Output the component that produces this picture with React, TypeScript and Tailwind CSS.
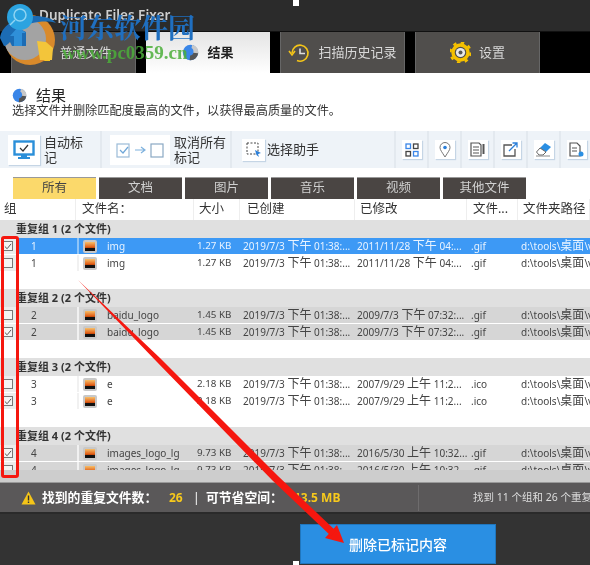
import React from "react";

const font = { fontFamily: '"Noto Sans", "Noto Sans CJK SC", sans-serif' };

function Thumb() {
  return (
    <div className="w-[14px] h-[13px] rounded-[2px] bg-[#c8c8c8] flex items-center justify-center">
      <svg width="10" height="9" viewBox="0 0 10 9">
        <defs>
          <linearGradient id="thumbGrad" x1="0" y1="0" x2="0" y2="1">
            <stop offset="0" stopColor="#f7c06a" />
            <stop offset="0.6" stopColor="#e0560f" />
            <stop offset="0.72" stopColor="#111" />
          </linearGradient>
        </defs>
        <rect width="10" height="9" fill="url(#thumbGrad)" />
      </svg>
    </div>
  );
}

function Check({ on }: { on: boolean }) {
  return (
    <div className="w-[10px] h-[10px] border border-[#777] bg-[#f4f4f4] flex items-center justify-center">
      {on && (
        <svg width="9" height="9" viewBox="0 0 9 9">
          <path d="M1 4.5 L3.5 7 L8 1.5" stroke="#555" strokeWidth="1.1" fill="none" />
        </svg>
      )}
    </div>
  );
}

type RowT = { on: boolean; n: number; name: string; size: string; mod: string; modT: string; ext: string };

function Row({ r, tone }: { r: RowT; tone: "sel" | "white" | "grey" }) {
  const bg = tone === "sel" ? "bg-[#3d99f5]" : tone === "white" ? "bg-white" : "bg-[#d6d6d6]";
  const fg = tone === "sel" ? "text-[#e8f3ff]" : "text-[#444]";
  return (
    <div className="flex h-[16px] mb-px overflow-hidden bg-[#f1f1f1]">
      <div className="w-[18px] flex items-center pl-[3px] bg-[#ececec] shrink-0">
        <Check on={r.on} />
      </div>
      <div className={`flex flex-1 items-center text-[10px] ${bg} ${fg}`}>
        <div className="w-[59px] pl-[13px] shrink-0">{r.n}</div>
        <div className={`w-[30px] h-full flex items-center pl-[4px] shrink-0 border-l-2 ${tone === "sel" ? "border-[#8fc5f8]" : "border-[#f1f1f1]"}`}>
          <Thumb />
        </div>
        <div className="w-[90px] shrink-0 text-[10px]">{r.name}</div>
        <div className="w-[46px] shrink-0 text-[9.8px]">{r.size}</div>
        <div className="w-[114px] shrink-0 whitespace-nowrap text-[10px]">
          2019/7/3 <span className="text-[12px]">下午</span> 01:38:...
        </div>
        <div className="w-[114px] shrink-0 whitespace-nowrap text-[10px]">
          {r.mod} <span className="text-[12px]">{r.modT.split(" ")[0]}</span> {r.modT.split(" ")[1]}
        </div>
        <div className="w-[50px] shrink-0">{r.ext}</div>
        <div className="whitespace-nowrap text-[10px]">
          d:\tools\<span className="text-[12px]">桌面</span>\v
        </div>
      </div>
    </div>
  );
}

function Group({ title, rows, tone }: { title: string; rows: RowT[]; tone: ("sel" | "white" | "grey")[] }) {
  return (
    <div>
      <div className="h-[18px] bg-[#e0e0e0] pl-[16px] flex items-center text-[11px] font-bold text-[#333]">{title}</div>
      {rows.map((r, i) => (
        <Row key={i} r={r} tone={tone[i]} />
      ))}
      <div className="h-[17px] bg-white" />
    </div>
  );
}

const img = { name: "img", size: "1.27 KB", mod: "2011/11/28", modT: "下午 04:...", ext: ".gif" };
const bd = { name: "baidu_logo", size: "1.45 KB", mod: "2009/7/3", modT: "下午 07:32:...", ext: ".gif" };
const e = { name: "e", size: "2.18 KB", mod: "2007/9/29", modT: "上午 11:2...", ext: ".ico" };
const lg = { name: "images_logo_lg", size: "9.73 KB", mod: "2016/5/30", modT: "上午 10:32...", ext: ".gif" };

function ToolSmall({ children }: { children: React.ReactNode }) {
  return (
    <div className="w-[33px] h-full border-r-2 border-[#e3e9ef] flex items-center justify-center shrink-0">
      <div className="w-[20px] h-[19px] bg-white shadow-[1px_1px_1px_#c5d5e5] flex items-center justify-center">{children}</div>
    </div>
  );
}

function Tab({ children, active, w }: { children: React.ReactNode; active?: boolean; w: string }) {
  return (
    <div
      className={`${w} h-[41px] flex items-center justify-center gap-[8px] text-[13px] shrink-0 ${
        active ? "bg-gradient-to-b from-[#e4e4e4] to-white text-[#222] font-bold" : "bg-[#504e4c] text-[#d8d8d8] border-x border-[#666]"
      }`}
    >
      {children}
    </div>
  );
}

function Pie({ s }: { s: number }) {
  return (
    <svg width={s} height={s} viewBox="0 0 20 20">
      <circle cx="10" cy="10" r="9" fill="#3a86e8" />
      <path d="M10 10 L12 1 A9 9 0 0 1 19 12 Z" fill="#c8c8c8" />
      <path d="M10 10 L19 11 A9 9 0 0 1 9 19 Z" fill="#555" />
      <circle cx="9" cy="9" r="4.5" fill="#3a86e8" />
    </svg>
  );
}

const cols = [
  ["w-[76px] pl-[4px]", "组"],
  ["w-[118px] pl-[6px]", "文件名："],
  ["w-[46px] pl-[5px]", "大小"],
  ["w-[115px] pl-[7px]", "已创建"],
  ["w-[112px] pl-[5px]", "已修改"],
  ["w-[51px] pl-[6px]", "文件..."],
  ["flex-1 pl-[5px]", "文件夹路径"],
];

const filters = ["所有", "文档", "图片", "音乐", "视频", "其他文件"];

export default function App() {
  return (
    <div className="relative w-[590px] h-[565px] overflow-hidden bg-white flex flex-col blur-[0.35px]" style={font}>
      {/* title bar */}
      <div className="h-[32px] bg-[#2b2b2b] flex items-center pl-[39px] text-[13.5px] font-semibold text-[#cfcfcf] shrink-0 border-b border-[#111]">
        Duplicate Files Fixer
      </div>
      {/* tabs */}
      <div className="h-[41px] bg-black flex gap-[10px] pl-[11px] shrink-0">
        <Tab w="w-[125px]">
          <svg width="16" height="18" viewBox="0 0 16 18">
            <rect x="1" y="1" width="14" height="16" fill="#f6c620" />
            <rect x="4" y="5" width="8" height="1.5" fill="#fff" />
            <rect x="4" y="9" width="8" height="1.5" fill="#fff" />
          </svg>
          普通文件
        </Tab>
        <Tab w="w-[124px]" active>
          <Pie s={17} />
          结果
        </Tab>
        <Tab w="w-[125px]">
          <svg width="22" height="20" viewBox="0 0 22 20" fill="none" stroke="#f5c518" strokeWidth="1.6">
            <path d="M4 10 A8 8 0 1 1 9 17.6" />
            <path d="M1 8 L4 12 L7 8" />
            <path d="M12 5.5 V10.5 H17" stroke="#ddd" />
          </svg>
          扫描历史记录
        </Tab>
        <Tab w="w-[125px]">
          <svg width="21" height="21" viewBox="0 0 21 21">
            <circle cx="10.5" cy="10.5" r="7.5" fill="none" stroke="#f5c000" strokeWidth="3.4" />
            <circle cx="10.5" cy="10.5" r="10" fill="none" stroke="#f5c000" strokeWidth="2.4" strokeDasharray="3.4 4.45" />
            <circle cx="10.5" cy="10.5" r="4.6" fill="#e8e8e8" />
            <circle cx="10.5" cy="10.5" r="2" fill="#555" />
          </svg>
          设置
        </Tab>
      </div>
      {/* heading */}
      <div className="h-[58px] shrink-0 pl-[12px] pt-[13px] text-[#333]">
        <div className="flex items-center gap-[9px] h-[18px]">
          <Pie s={15} />
          <span className="text-[15px] leading-none text-[#222]">结果</span>
        </div>
        <div className="text-[12.2px] leading-[14px] whitespace-nowrap">选择文件并删除匹配度最高的文件，以获得最高质量的文件。</div>
      </div>
      {/* toolbar */}
      <div className="h-[37px] bg-[#eef3f8] flex items-center shrink-0 text-[13px] leading-[15px] text-[#333]">
        <div className="w-[102px] h-full flex items-center pl-[8px] gap-[4px] border-r-2 border-[#e3e9ef] shrink-0">
          <div className="w-[32px] h-[30px] bg-white flex items-center justify-center shadow-[1px_1px_1px_#c5d5e5] shrink-0">
            <svg width="22" height="20" viewBox="0 0 22 20">
              <rect x="1.5" y="1.5" width="19" height="13" fill="#fff" stroke="#2b8fd9" strokeWidth="2.4" />
              <path d="M7 8 L10 11 L15 5" stroke="#333" strokeWidth="1.2" fill="none" />
              <rect x="8" y="15" width="6" height="2" fill="#2b8fd9" />
              <rect x="5" y="17" width="12" height="2" fill="#2b8fd9" />
            </svg>
          </div>
          <div className="w-[42px]">自动标记</div>
        </div>
        <div className="w-[130px] h-full flex items-center pl-[8px] gap-[4px] border-r-2 border-[#e3e9ef] shrink-0">
          <div className="w-[60px] h-[30px] bg-white flex items-center justify-center shrink-0">
            <svg width="48" height="18" viewBox="0 0 48 18" fill="none">
              <rect x="1" y="3" width="12" height="13" stroke="#9bbbd8" strokeWidth="1.2" />
              <path d="M4 9 L7 12 L12 6" stroke="#6ea6d8" strokeWidth="1.2" />
              <path d="M19 9 H28 M25 6 L29 9 L25 12" stroke="#7fb2de" strokeWidth="1.2" />
              <rect x="35" y="3" width="12" height="13" stroke="#8aa8c4" strokeWidth="1.2" />
            </svg>
          </div>
          <div className="w-[52px]">取消所有标记</div>
        </div>
        <div className="w-[164px] h-full flex items-center pl-[10px] gap-[2px] border-r-2 border-[#e3e9ef] shrink-0">
          <div className="w-[23px] h-[22px] bg-white flex items-center justify-center shadow-[1px_1px_1px_#c5d5e5] shrink-0">
            <svg width="16" height="16" viewBox="0 0 16 16" fill="none">
              <rect x="1" y="1" width="11" height="11" stroke="#444" strokeDasharray="2 1.5" />
              <path d="M9 8 L15 11 L12 12 L13 15 L10.5 13 Z" fill="#2b7fd9" />
            </svg>
          </div>
          <span className="whitespace-nowrap">选择助手</span>
        </div>
        <ToolSmall>
          <svg width="14" height="14" viewBox="0 0 14 14" fill="none" strokeWidth="1.3">
            <rect x="1" y="1" width="4.5" height="4.5" stroke="#3a86e8" />
            <rect x="8.5" y="1" width="4.5" height="4.5" stroke="#444" />
            <rect x="1" y="8.5" width="4.5" height="4.5" stroke="#444" />
            <rect x="8.5" y="8.5" width="4.5" height="4.5" stroke="#3a86e8" />
          </svg>
        </ToolSmall>
        <ToolSmall>
          <svg width="12" height="16" viewBox="0 0 12 16" fill="none">
            <path d="M6 15 C3 10 1 8 1 5.5 A5 5 0 0 1 11 5.5 C11 8 9 10 6 15 Z" stroke="#777" />
            <circle cx="6" cy="5.5" r="1.8" fill="#2b7fd9" />
          </svg>
        </ToolSmall>
        <ToolSmall>
          <svg width="16" height="15" viewBox="0 0 16 15" fill="none" stroke="#555" strokeWidth="1.2">
            <path d="M1 1 H9 L11 3 V14 H1 Z" />
            <path d="M3 5 H9 M3 8 H9 M3 11 H9" />
            <path d="M13.5 2 V12" strokeWidth="2" />
          </svg>
        </ToolSmall>
        <ToolSmall>
          <svg width="15" height="15" viewBox="0 0 15 15" fill="none" strokeWidth="1.3">
            <path d="M9 3 H1 V14 H12 V7" stroke="#555" />
            <path d="M6 9 L14 1 M9.5 1 H14 V5.5" stroke="#2b7fd9" />
          </svg>
        </ToolSmall>
        <ToolSmall>
          <svg width="17" height="15" viewBox="0 0 17 15">
            <path d="M10 1 L16 5 L11 10 L5 6 Z" fill="#2b8fe3" />
            <path d="M5 6 L11 10 L8 13 H4 L1.5 10 Z" fill="#fff" stroke="#666" />
            <path d="M1 14 H15" stroke="#888" />
          </svg>
        </ToolSmall>
        <ToolSmall>
          <svg width="15" height="15" viewBox="0 0 15 15" fill="none" stroke="#555" strokeWidth="1.2">
            <path d="M1 1 H8 L11 4 V14 H1 Z" />
            <path d="M3 6 H8 M3 9 H8" />
            <circle cx="12" cy="12" r="2.5" fill="#2b8fe3" stroke="none" />
          </svg>
        </ToolSmall>
      </div>
      {/* filter tabs */}
      <div className="h-[31px] shrink-0 flex items-end gap-[3px] pl-[13px]">
        {filters.map((f, i) => (
          <div
            key={f}
            className={`w-[83px] h-[22px] flex items-center justify-center text-[12.5px] border-t border-[#999] ${
              i === 0 ? "bg-[#fbd96b] text-[#444]" : "bg-[#4a4543] text-[#d0d0d0]"
            }`}
          >
            {f}
          </div>
        ))}
      </div>
      {/* header row */}
      <div className="h-[21px] shrink-0 flex text-[12.5px] text-[#333]">
        {cols.map(([w, t]) => (
          <div key={t} className={`${w} shrink-0 border-r border-[#eee] flex items-center whitespace-nowrap`}>
            {t}
          </div>
        ))}
      </div>
      {/* list */}
      <div className="h-[250px] overflow-hidden shrink-0">
        <Group
          title="重复组 1 (2 个文件)"
          tone={["sel", "white"]}
          rows={[
            { on: true, n: 1, ...img },
            { on: false, n: 1, ...img },
          ]}
        />
        <Group
          title="重复组 2 (2 个文件)"
          tone={["grey", "grey"]}
          rows={[
            { on: false, n: 2, ...bd },
            { on: true, n: 2, ...bd },
          ]}
        />
        <Group
          title="重复组 3 (2 个文件)"
          tone={["white", "white"]}
          rows={[
            { on: false, n: 3, ...e },
            { on: true, n: 3, ...e },
          ]}
        />
        <Group
          title="重复组 4 (2 个文件)"
          tone={["grey", "grey"]}
          rows={[
            { on: true, n: 4, ...lg },
            { on: false, n: 4, ...lg },
          ]}
        />
      </div>
      {/* h scrollbar */}
      <div className="h-[13px] bg-[#cdcdcd] shrink-0 border-b border-[#999]" />
      {/* status bar */}
      <div className="h-[31px] bg-[#5a5859] shrink-0 flex items-center text-white border-b-2 border-[#2a2a2a]">
        <svg width="15" height="14" viewBox="0 0 15 14" className="ml-[21px] shrink-0">
          <path d="M7.5 0.5 L14.5 13.5 H0.5 Z" fill="#f5c518" />
          <rect x="6.8" y="4.5" width="1.4" height="5" fill="#333" />
          <rect x="6.8" y="10.5" width="1.4" height="1.5" fill="#333" />
        </svg>
        <span className="ml-[6px] w-[127px] text-[12.8px] font-semibold whitespace-nowrap shrink-0">找到的重复文件数：</span>
        <span className="w-[24px] text-[12px] font-bold text-[#f7c91c] shrink-0">26</span>
        <span className="w-[13px] text-[12px] shrink-0">|</span>
        <span className="w-[88px] text-[12.8px] font-semibold whitespace-nowrap shrink-0">可节省空间：</span>
        <span className="w-[124px] text-[12px] font-bold text-[#f7c91c] shrink-0">13.5 MB</span>
        <div className="w-px h-[26px] bg-[#6e6c6d] shrink-0" />
        <span className="ml-[54px] text-[10.5px] text-[#ddd] whitespace-nowrap">找到 11 个组和 26 个重复文件</span>
      </div>
      {/* bottom */}
      <div className="flex-1 bg-[#333] flex items-start pl-[300px] pt-[10px]">
        <div className="w-[196px] h-[40px] bg-[#2a8fe3] border border-[#2076bd] flex items-center justify-center text-[14px] font-medium text-white">
          删除已标记内容
        </div>
      </div>

      {/* overlays: image annotations and watermark */}
      <div className="absolute left-[293px] top-0 w-[6px] h-[6px] bg-white" />
      <div className="absolute left-[293px] top-[561px] w-[6px] h-[4px] bg-white" />
      <div className="absolute left-[1px] top-[236px] w-[18px] h-[242px] border-[3px] border-[#f5170f] rounded-[3px]" />
      <svg className="absolute left-0 top-0 pointer-events-none" width="590" height="565" viewBox="0 0 590 565">
        <polygon points="337,525 344,543 325,538" fill="#f5170f" />
        <polygon points="78,280 160,358 278,476 336,531 331,536 272,480 157,362" fill="#f5170f" />
      </svg>
      <svg className="absolute left-0 top-0" width="60" height="68" viewBox="0 0 60 68">
        <circle cx="30" cy="40" r="25" fill="#d98a2b" />
        <circle cx="25" cy="39" r="21" fill="#a3a3a3" />
        <path d="M0 38 C2 24 18 16 34 16 C44 16 52 18 56 23 C46 20 30 22 18 28 L26 32 L26 46 L12 46 L10 42 C8 44 6 46 4 46 Z" fill="#1c6cb4" />
        <path d="M10 36 L18 27 L26 33 L22 33 L22 46 L14 46 L14 36 Z" fill="#2f8fd8" />
        <circle cx="20" cy="17" r="13" fill="#2ba3e0" />
        <circle cx="20" cy="15" r="6" fill="none" stroke="#8fd4f2" strokeWidth="1.5" />
        <path d="M15 20 L10 25" stroke="#8fd4f2" strokeWidth="1.5" />
        <path d="M37 41 L46 42 L53 48 L52 60 L40 60 Z" fill="#f3c53a" />
      </svg>
      <div
        className="absolute left-[60px] top-[9px] text-[27px] leading-[36px] font-bold text-[#1f6fc0] whitespace-nowrap"
        style={{ fontFamily: '"Noto Serif CJK SC", "Noto Sans CJK SC", serif' }}
      >
        河东软件园
      </div>
      <div
        className="absolute left-[62px] top-[41px] text-[19px] leading-[24px] font-bold text-[#4caf3a] whitespace-nowrap opacity-85"
        style={{ fontFamily: '"Liberation Serif", serif' }}
      >
        www.pc0359.cn
      </div>
    </div>
  );
}
